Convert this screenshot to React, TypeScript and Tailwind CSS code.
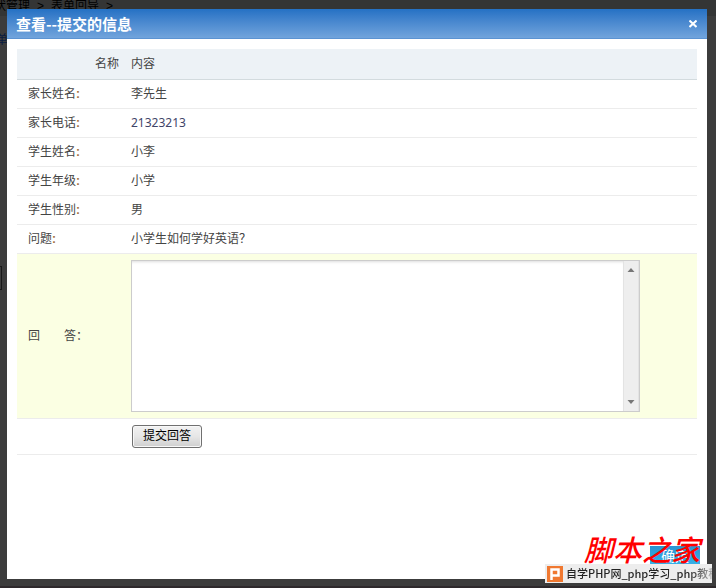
import { useState } from 'react'

type Field = {
  label: string
  value: string
  phone?: boolean
}

const fields: Field[] = [
  { label: '家长姓名', value: '李先生' },
  { label: '家长电话', value: '21323213', phone: true },
  { label: '学生姓名', value: '小李' },
  { label: '学生年级', value: '小学' },
  { label: '学生性别', value: '男' },
  { label: '问题', value: '小学生如何学好英语？' },
]

export default function App() {
  const [open, setOpen] = useState(true)

  return (
    <div className="relative flex min-h-screen flex-col overflow-hidden border-b-2 border-[#2e292c] bg-[#3c3c3c] pt-[9px] pr-[9px] pb-[7px] pl-[7px] font-['Liberation_Sans','Noto_Sans_CJK_SC',sans-serif] text-xs text-[#444]">
      <PageBehind />
      {open && (
        <section role="dialog" aria-labelledby="dialog-title" className="relative flex flex-1 flex-col bg-white">
          <header className="flex h-[30px] items-center justify-between border-b border-[#5b93d2] bg-linear-to-b from-[#2471c4] to-[#71a4dc] pr-2 pl-[9px] text-white">
            <h1 id="dialog-title" className="font-['Noto_Sans_CJK_SC',sans-serif] text-[15px] leading-[30px] font-bold">查看--提交的信息</h1>
            <button type="button" aria-label="关闭" onClick={() => setOpen(false)} className="grid size-3 place-items-center">
              <svg width="8" height="8" viewBox="0 0 8 8" fill="none" stroke="currentColor" strokeWidth="2">
                <path d="M0.5 0.5 7.5 7M7.5 0.5 0.5 7" />
              </svg>
            </button>
          </header>
          <div className="px-[10px] pt-[10px]">
            <InfoTable />
          </div>
        </section>
      )}
      <Watermark />
    </div>
  )
}

function InfoTable() {
  const [answer, setAnswer] = useState('')

  return (
    <table className="w-full table-fixed border-collapse">
      <colgroup>
        <col className="w-[108px]" />
        <col />
      </colgroup>
      <thead>
        <tr className="h-[30px] border-b border-[#d3dbde] bg-[#edf2f6]">
          <th className="pr-[6px] text-right font-normal">名称</th>
          <th className="pl-[6px] text-left font-normal">内容</th>
        </tr>
      </thead>
      <tbody>
        {fields.map((field) => (
          <tr key={field.label} className="h-[29px] border-b border-[#ececec]">
            <th scope="row" className="pt-px pl-[11px] text-left font-normal">
              {field.label}<span className="font-bold text-[#a5703f]">:</span>
            </th>
            <td className="pl-[6px]">
              {field.phone ? <span className="font-['Noto_Sans',sans-serif] text-[#3f4468]">{field.value}</span> : field.value}
            </td>
          </tr>
        ))}
        <tr className="h-[165px] border-b border-[#ececec] bg-[#fbffe3]">
          <th scope="row" className="pt-px pl-[11px] text-left font-normal">
            <label htmlFor="answer">回　　答：</label>
          </th>
          <td className="pl-[6px]">
            <div className="flex h-[152px] w-[509px] max-w-full border border-[#ccc] bg-white">
              <textarea
                id="answer"
                value={answer}
                onChange={(event) => setAnswer(event.target.value)}
                className="min-w-0 flex-1 resize-none p-1 shadow-[inset_0_3px_3px_-2px_#ddd] outline-none [scrollbar-width:none]"
              />
              <ScrollTrack />
            </div>
          </td>
        </tr>
        <tr className="h-[36px] border-b border-[#ececec]">
          <td />
          <td className="pl-[7px]">
            <button type="submit" className="block h-[23px] w-[70px] rounded-[3px] border border-[#707070] bg-linear-to-b from-[#f2f2f2] via-[#e6e6e6] to-[#cfcfcf] text-xs text-black shadow-[inset_0_0_0_1px_#f8f8f8]">
              提交回答
            </button>
          </td>
        </tr>
      </tbody>
    </table>
  )
}

function ScrollTrack() {
  return (
    <div aria-hidden="true" className="flex w-4 flex-col items-center justify-between border-x border-[#e3e3e3] bg-[#eee] py-[6px]">
      <svg width="8" height="5" viewBox="0 0 8 5" fill="#777"><path d="M4 1 7.5 5H0.5Z" /></svg>
      <svg width="8" height="5" viewBox="0 0 8 5" fill="#777"><path d="M0.5 0H7.5L4 4Z" /></svg>
    </div>
  )
}

// dimmed page that shows around the edges of the dialog
function PageBehind() {
  return (
    <div aria-hidden="true" className="absolute inset-0 overflow-hidden">
      <div className="h-4 bg-[#343535] whitespace-nowrap text-black">
        <p className="-ml-[6px] flex gap-[7px] leading-3">
          <span>状管理</span><span>&gt;</span><span>表单回导</span><span>&gt;</span>
        </p>
      </div>
      <p className="mt-4 -ml-[16px] text-[#0a1c40]">表单</p>
      <div className="mt-[218px] h-6 w-[2px] border border-l-0 border-[#181818]" />
    </div>
  )
}

function Watermark() {
  return (
    <div className="absolute right-1 bottom-[3px] flex w-[167px] flex-col font-['Noto_Sans_CJK_SC',sans-serif]">
      <div className="relative flex h-7 justify-end pr-3">
        <span className="mt-[10px] h-[18px] w-[50px] bg-linear-to-b from-[#2b93d1] to-[#35b0e8] text-center text-sm leading-[18px] text-white">确定</span>
        <span className="absolute right-3 bottom-0 text-[29px] leading-8 font-medium whitespace-nowrap text-[#f00] italic">脚本之家</span>
      </div>
      <div className="flex h-[19px] items-center gap-[3px] overflow-hidden bg-[#ededed] pl-[2px]">
        <svg width="16" height="16" viewBox="0 0 16 16" className="shrink-0">
          <rect width="16" height="16" fill="#f07830" />
          <path d="M4.5 14V3.5H11.5V9.5H4.5" fill="none" stroke="#fff" strokeWidth="2.5" />
        </svg>
        <span className="bg-linear-to-r from-[#222] from-80% to-[#ddd] bg-clip-text text-[11px] font-medium whitespace-nowrap text-transparent">自学PHP网_php学习_php教程</span>
      </div>
    </div>
  )
}
